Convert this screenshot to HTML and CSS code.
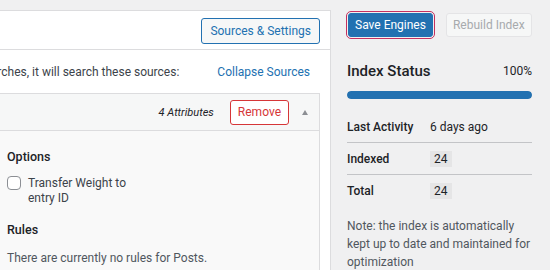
FILE: index.html
```html
<!DOCTYPE html>
<html lang="en">
<head>
    <meta charset="UTF-8">
    <meta name="viewport" content="width=device-width, initial-scale=1.0">
    <title>Engines</title>
    <link rel="stylesheet" href="styles.css">
</head>
<body>
    <div class="layout">
        <div class="main">
            <div class="main-header">
                <button class="btn-secondary">Sources &amp; Settings</button>
            </div>

            <div class="intro">
                <span class="intro-text">When a user searches, it will search these sources:</span>
                <a href="#" class="link">Collapse Sources</a>
            </div>

            <div class="source">
                <div class="source-header">
                    <span class="attr-count">4 Attributes</span>
                    <button class="btn-remove">Remove</button>
                    <span class="toggle"></span>
                </div>
                <div class="source-body">
                    <h4>Options</h4>
                    <label class="check">
                        <span class="box"></span>
                        <span>Transfer Weight to<br>entry ID</span>
                    </label>
                    <h4>Rules</h4>
                    <p class="muted">There are currently no rules for Posts.</p>
                </div>
            </div>
        </div>

        <div class="sidebar">
            <div class="actions">
                <button class="btn-primary">Save Engines</button>
                <button class="btn-disabled" disabled>Rebuild Index</button>
            </div>

            <div class="status-head">
                <h3>Index Status</h3>
                <span>100%</span>
            </div>
            <div class="progress"><div class="progress-fill" style="width: 100%"></div></div>

            <div class="stats">
                <div class="stat">
                    <span class="stat-label">Last Activity</span>
                    <span>6 days ago</span>
                </div>
                <div class="stat">
                    <span class="stat-label">Indexed</span>
                    <code>24</code>
                </div>
                <div class="stat">
                    <span class="stat-label">Total</span>
                    <code>24</code>
                </div>
            </div>

            <p class="note">Note: the index is automatically kept up to date and maintained for optimization</p>
        </div>
    </div>
</body>
</html>
```

FILE: styles.css
```css
body {
    margin: 0;
    font-family: Roboto, "Noto Sans", sans-serif;
    font-size: 12px;
    color: #1d2327;
    background-color: #f0f0f1;
    overflow: hidden;
}

.layout {
    display: flex;
    height: 270px;
}

.main {
    width: 331px;
    flex-shrink: 0;
    margin-top: 10px;
    background: #fff;
    border-top: 1px solid #dcdcde;
    border-right: 1px solid #dcdcde;
    overflow: hidden;
    padding-right: 10px;
    box-sizing: border-box;
}

.main-header {
    display: flex;
    justify-content: flex-end;
    height: 38px;
    align-items: center;
    border-bottom: 1px solid #dcdcde;
    margin-right: -10px;
    padding-right: 10px;
}

button {
    font-family: inherit;
    font-size: 12px;
    border-radius: 3px;
    cursor: pointer;
    box-sizing: border-box;
    white-space: nowrap;
}

.btn-secondary {
    height: 26px;
    padding: 0 8px;
    margin-top: 1px;
    color: #2271b1;
    background: #f6f7f7;
    border: 1px solid #2271b1;
}

.intro {
    display: flex;
    justify-content: flex-end;
    align-items: center;
    gap: 38px;
    height: 43px;
    padding-right: 10px;
}

.intro-text {
    white-space: nowrap;
    flex-shrink: 0;
    color: #3c434a;
}

.link {
    color: #2271b1;
    text-decoration: none;
    white-space: nowrap;
}

.source {
    margin-left: -13px;
    border: 1px solid #dcdcde;
    border-bottom: none;
    background: #f9f9f9;
}

.source-header {
    display: flex;
    align-items: center;
    justify-content: flex-end;
    height: 36px;
    padding-right: 11px;
    background: #f6f7f7;
    border-bottom: 1px solid #dcdcde;
}

.attr-count {
    font-style: italic;
    font-size: 11px;
    color: #1d2327;
    margin-right: 16px;
}

.btn-remove {
    height: 25px;
    padding: 0 7px;
    color: #d63638;
    background: #fff;
    border: 1px solid #d63638;
}

.toggle {
    width: 0;
    height: 0;
    margin-left: 13px;
    border-left: 3.5px solid transparent;
    border-right: 3.5px solid transparent;
    border-bottom: 5px solid #8c8f94;
}

.source-body {
    padding: 17px 19px 10px;
}

h4 {
    margin: 0;
    font-size: 12.5px;
    font-weight: 500;
    line-height: 18px;
}

.check {
    display: flex;
    gap: 7px;
    margin: 10px 0 15px;
    line-height: 15px;
    color: #3c434a;
}

.box {
    width: 12px;
    height: 12px;
    border: 1px solid #8c8f94;
    border-radius: 4px;
    background: #fff;
    flex-shrink: 0;
}

.muted {
    margin: 12px 0 0;
    color: #50575e;
}

.sidebar {
    flex: 1;
    min-width: 0;
    padding: 12px 18px 0 15px;
}

.actions {
    display: flex;
    gap: 13px;
    align-items: center;
}

.btn-primary {
    height: 24px;
    padding: 0 6px;
    margin: 1px 0 0 2px;
    color: #fff;
    background: #2271b1;
    border: 1px solid #2271b1;
    outline: 1px solid #c3305f;
    outline-offset: 1px;
}

.btn-disabled {
    height: 24px;
    padding: 0 6px;
    color: #a7aaad;
    background: #f6f7f7;
    border: 1px solid #e4e4e6;
}

.status-head {
    display: flex;
    justify-content: space-between;
    align-items: center;
    margin: 25px 0 11px 1px;
}

h3 {
    margin: 0;
    font-size: 15px;
    font-weight: 500;
}

.progress {
    height: 8px;
    margin-left: 1px;
    border-radius: 4px;
    background: #dcdcde;
    overflow: hidden;
}

.progress-fill {
    height: 100%;
    background: #2271b1;
    border-radius: 4px;
}

.stats {
    margin: 12px 0 0 1px;
}

.stat {
    display: flex;
    align-items: center;
    height: 31px;
    border-bottom: 1px solid #c3c4c7;
}

.stat:last-child {
    border-bottom: none;
}

.stat-label {
    width: 83px;
    font-weight: 500;
}

code {
    font-family: inherit;
    font-size: 12px;
    padding: 1px 4px;
    background: #e5e5e6;
}

.note {
    margin: 11px 0 0 1px;
    line-height: 18px;
    color: #50575e;
}
```
